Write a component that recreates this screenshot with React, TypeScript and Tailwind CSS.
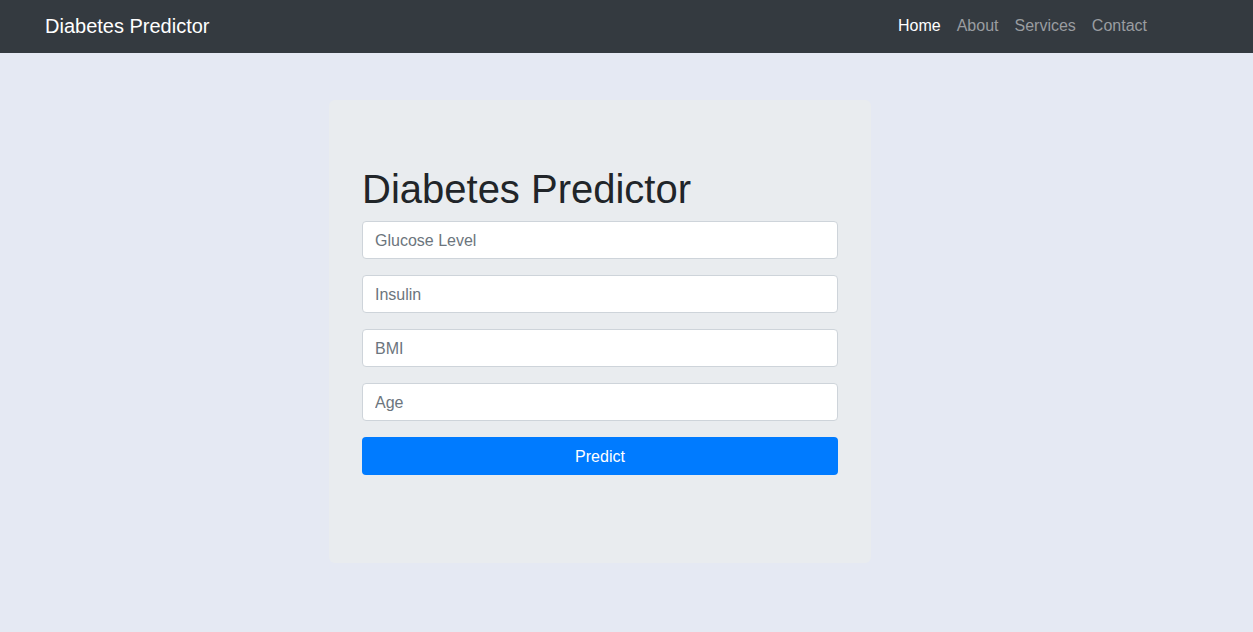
const fields = ['Glucose Level', 'Insulin', 'BMI', 'Age'];
const links = ['Home', 'About', 'Services', 'Contact'];

export default function App() {
  return (
    <div className="min-h-[632px] bg-[#e5e9f3] font-['Liberation_Sans',Arial,sans-serif] text-[#212529]">
      <nav className="flex h-[53px] items-center justify-between bg-[#343a40] pb-[2px] pl-[45px] pr-[98px]">
        <a className="text-[20px] leading-[30px] text-white">Diabetes Predictor</a>
        <ul className="flex">
          {links.map((l, i) => (
            <li key={l}>
              <a
                className={`px-2 text-[16px] leading-6 ${i === 0 ? 'text-white' : 'text-[#9a9da0]'}`}
              >
                {l}
              </a>
            </li>
          ))}
        </ul>
      </nav>

      <div className="ml-[329px] mt-[47px] w-[542px] rounded-md bg-[#e9ecef] px-[33px] pb-[88px] pt-[65px]">
        <h1 className="mb-2 text-[40px] leading-[48px] font-normal">Diabetes Predictor</h1>
        <form onSubmit={(e) => e.preventDefault()}>
          {fields.map((f) => (
            <div key={f} className="mb-4">
              <input
                type="text"
                placeholder={f}
                className="block h-[38px] w-full rounded-[4px] border border-[#ced4da] bg-white px-3 pt-[2px] text-[16px] text-[#495057] placeholder:text-[#6c757d] outline-none"
              />
            </div>
          ))}
          <button
            type="submit"
            className="block h-[38px] w-full rounded-[4px] bg-[#007bff] pt-[2px] text-[16px] text-white"
          >
            Predict
          </button>
        </form>
      </div>
    </div>
  );
}
